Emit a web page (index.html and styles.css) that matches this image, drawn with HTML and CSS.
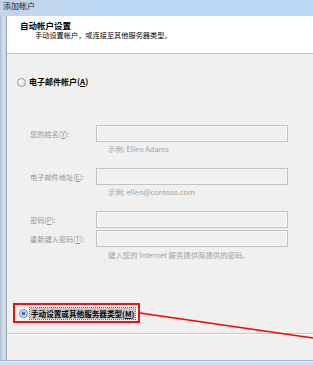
FILE: index.html
```html
<!DOCTYPE html>
<html lang="zh-CN">
<head>
    <meta charset="UTF-8">
    <title>添加帐户</title>
    <link rel="stylesheet" href="styles.css">
</head>
<body>
    <div class="window">
        <div class="titlebar">添加帐户</div>
        <div class="frame">
            <div class="frame-edge"></div>
            <div class="dialog">
                <div class="header">
                    <div class="header-title">自动帐户设置</div>
                    <div class="header-sub">手动设置帐户，或连接至其他服务器类型。</div>
                </div>
                <div class="main">
                    <div class="radio-row">
                        <span class="radio"></span>
                        <span class="radio-text">电子邮件帐户(<u>A</u>)</span>
                    </div>

                    <div class="fields">
                        <div class="field first">
                            <span class="label">您的姓名(<u>Y</u>):</span>
                            <span class="input"></span>
                        </div>
                        <div class="hint">示例: Ellen Adams</div>

                        <div class="field">
                            <span class="label">电子邮件地址(<u>E</u>):</span>
                            <span class="input"></span>
                        </div>
                        <div class="hint">示例: ellen@contoso.com</div>

                        <div class="field">
                            <span class="label">密码(<u>P</u>):</span>
                            <span class="input"></span>
                        </div>
                        <div class="field tight">
                            <span class="label">重新键入密码(<u>T</u>):</span>
                            <span class="input"></span>
                        </div>
                        <div class="hint tight">键入您的 Internet 服务提供商提供的密码。</div>
                    </div>

                    <div class="manual-box">
                        <span class="radio checked"></span>
                        <span class="manual-text">手动设置或其他服务器类型(<u>M</u>)</span>
                    </div>
                </div>
                <div class="footer"></div>
            </div>
        </div>
        <div class="frame-bottom"></div>
    </div>

    <svg class="pointer" width="313" height="365" viewBox="0 0 313 365">
        <line x1="140" y1="313" x2="313" y2="338" stroke="#ff0000" stroke-width="1.5"/>
    </svg>
</body>
</html>
```

FILE: styles.css
```css
body {
    margin: 0;
    width: 313px;
    height: 365px;
    overflow: hidden;
    position: relative;
    font-family: "Noto Sans CJK SC", "Liberation Sans", sans-serif;
    color: #000;
    background: #c8e0f8;
}
u {
    text-decoration: underline;
    text-underline-offset: 1px;
}
.window {
    display: flex;
    flex-direction: column;
    height: 365px;
}
.titlebar {
    height: 16px;
    box-sizing: border-box;
    padding: 1px 0 0 3px;
    font-size: 8px;
    line-height: 10px;
    color: #1a1a1a;
    background: linear-gradient(90deg, #c4d4e6, #bcd8f4 30%, #b9d8f8);
}
.frame {
    display: flex;
    height: 344px;
}
.frame-edge {
    width: 6px;
    background: linear-gradient(90deg, #a9bbcf, #d9e3ee 55%, #c3d0de);
    border-right: 1px solid #9eabb9;
}
.dialog {
    flex: 1;
    display: flex;
    flex-direction: column;
    background: #f0f0f0;
}
.header {
    height: 32px;
    padding-top: 5px;
    background: #fff;
    border-bottom: 1px solid #c6c6c6;
}
.header-title {
    padding-left: 13px;
    font-size: 8.5px;
    line-height: 9px;
    font-weight: bold;
}
.header-sub {
    margin-top: 1px;
    padding-left: 28px;
    font-size: 7.2px;
    line-height: 8px;
}
.main {
    height: 279px;
    box-sizing: border-box;
    padding-top: 22px;
}
.radio-row {
    display: flex;
    align-items: center;
    height: 12px;
    margin-left: 10px;
    gap: 3px;
}
.radio {
    width: 7px;
    height: 7px;
    border-radius: 50%;
    border: 1px solid #9a9a9a;
    background: radial-gradient(circle at 40% 35%, #fdfdfd, #d4d4d4);
    flex-shrink: 0;
}
.radio.checked {
    border-color: #6d7f93;
    background: radial-gradient(circle, #1f62b8 0, #3a82d4 1.6px, #dfe6ee 2.4px, #f4f4f4 100%);
}
.radio-text {
    font-size: 8px;
    line-height: 12px;
    font-weight: bold;
}
.fields {
    margin-top: 37px;
    margin-left: 23px;
}
.field {
    display: flex;
    align-items: center;
    height: 17px;
    margin-top: 13px;
}
.field.first {
    margin-top: 0;
}
.field.tight {
    margin-top: 2px;
}
.label {
    width: 66px;
    font-size: 7.2px;
    color: #969696;
    white-space: nowrap;
}
.input {
    width: 192px;
    height: 17px;
    box-sizing: border-box;
    border: 1px solid #c2c2c2;
    box-shadow: inset 0 0 0 1px #f6f6f6;
    background: #f0f0f0;
}
.hint {
    margin-top: 1px;
    padding-left: 78px;
    font-size: 7.4px;
    line-height: 12px;
    color: #a0a0a0;
    white-space: nowrap;
}
.hint.tight {
    margin-top: 2px;
}
.manual-box {
    display: flex;
    align-items: center;
    gap: 2px;
    width: 127px;
    height: 20px;
    box-sizing: border-box;
    margin: 42px 0 0 6px;
    padding-left: 4px;
    border: 2px solid #ee1111;
}
.manual-text {
    font-size: 7.6px;
    line-height: 11px;
    font-weight: bold;
    background: #c6c6c6;
    outline: 1px dotted #666;
    padding: 0 1px;
    white-space: nowrap;
}
.footer {
    flex: 1;
    border-top: 1px solid #c8c8c8;
    box-shadow: inset 0 1px 0 #fff;
}
.frame-bottom {
    flex: 1;
    border-top: 1px solid #a8b0b8;
    box-shadow: inset 0 1px 0 #eef4fa;
    background: #c6def6;
}
.pointer {
    position: absolute;
    left: 0;
    top: 0;
    pointer-events: none;
}
```
